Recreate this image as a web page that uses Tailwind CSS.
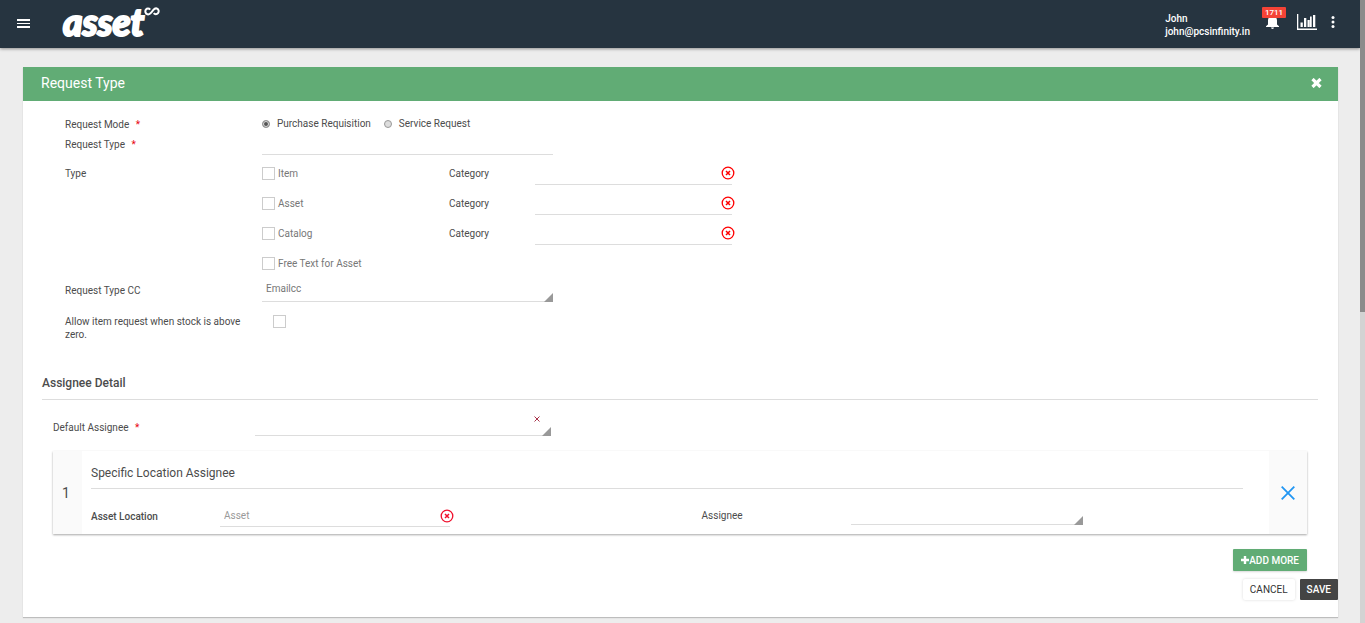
<!DOCTYPE html>
<html lang="en">
<head>
  <meta charset="UTF-8" />
  <meta name="viewport" content="width=device-width, initial-scale=1.0" />
  <title>Asset - Request Type</title>
  <script src="https://cdn.jsdelivr.net/npm/@tailwindcss/browser@4"></script>
</head>
<body class="flex min-h-screen bg-[#ededed] font-[Roboto,sans-serif] text-[10px] leading-[13px] text-[#4c4c4c]">

  <svg class="hidden">
    <symbol id="clear" viewBox="0 0 14 14">
      <circle cx="7" cy="7" r="5.8" fill="none" stroke="currentColor" stroke-width="1.3" />
      <path d="M5 5l4 4M9 5l-4 4" fill="none" stroke="currentColor" stroke-width="1.5" />
    </symbol>
    <symbol id="corner" viewBox="0 0 9 9"><path d="M9 0v9H0z" fill="#999" /></symbol>
  </svg>

  <div class="min-w-0 flex-1">
    <!-- Top bar -->
    <header class="flex h-12 items-center bg-[#263440] pr-[25px] pb-1 pl-[17px] text-white shadow-[0_1px_3px_rgba(0,0,0,0.4)]">
      <button type="button" aria-label="Menu" class="flex pt-[3px]">
        <svg class="h-[9px] w-[13px]" viewBox="0 0 13 9" fill="#fff" shape-rendering="crispEdges"><path d="M0 0h13v2H0zM0 4h13v1H0zM0 7h13v2H0z" /></svg>
      </button>
      <a href="#" class="ml-[33px] flex items-start">
        <span class="font-[Lato,sans-serif] text-[37px] leading-10 font-black italic [-webkit-text-stroke:2px_#fff]">asset</span>
        <svg class="mt-[5px] h-[9px] w-4" viewBox="0 0 16 9" fill="none" stroke="#fff" stroke-width="2"><path d="M6.200 2.600C5 1.200 3 1.100 1.900 2.600C.8 4.200 1.400 6.800 3.400 7.300C5 7.700 6.200 6.800 7.200 5.600L9.400 2.900C10.400 1.700 11.500 1.100 12.800 1.500C14.800 2.100 15.200 4.700 14 6.200C12.800 7.700 10.800 7.600 9.700 6.200" /></svg>
      </a>
      <div class="ml-auto pt-[6px] font-medium">
        <div>John</div>
        <div>john@pcsinfinity.in</div>
      </div>
      <button type="button" aria-label="Notifications" class="relative ml-3 flex h-[30px] w-6 items-end pb-2 pl-1">
        <svg class="h-[15px] w-[13px]" viewBox="0 0 13 15" fill="#fff"><path d="M6.500 0a1 1 0 0 1 1 1v1c2.300.500 3.500 2.300 3.500 4.500v4l2 1.700V13H0v-.800l2-1.700v-4C2 4.300 3.200 2.500 5.500 2V1a1 1 0 0 1 1-1zM5 13.600h3a1.500 1.300 0 0 1-3 0z" /></svg>
        <span class="absolute top-0 left-0 h-[11px] w-6 rounded-[1px] bg-[#f44336] text-center text-[8px] leading-[11px] font-medium">1711</span>
      </button>
      <button type="button" aria-label="Reports" class="ml-[11px] flex">
        <svg class="h-4 w-5" viewBox="0 0 20 16" fill="#fff"><path d="M0 0h1.300v14.500H20V16H0zM3.500 8.500h2.300V13H3.500zM7 4h2.300v9H7zM10.500 6h2.300v7h-2.300zM13 2.500h1.700V13H13zM16 1h2.300v12H16z" /></svg>
      </button>
      <button type="button" aria-label="More" class="ml-[14px] flex">
        <svg class="h-3 w-1" viewBox="0 0 4 12" fill="#fff"><circle cx="2" cy="1.600" r="1.500" /><circle cx="2" cy="6" r="1.500" /><circle cx="2" cy="10.400" r="1.500" /></svg>
      </button>
    </header>

    <main class="mt-[19px] mr-[22px] mb-[6px] ml-[23px] bg-white pb-[17px] shadow-[0_1px_1px_rgba(0,0,0,0.2)]">
      <div class="flex h-[34px] items-center justify-between bg-[#61ac75] pr-4 pb-[2px] pl-[18px] text-white">
        <h1 class="text-sm">Request Type</h1>
        <button type="button" aria-label="Close" class="flex">
          <svg class="h-[10px] w-[11px]" viewBox="0 0 11 10"><path d="M1.500 1l8 8M9.500 1l-8 8" stroke="#fff" stroke-width="3.200" /></svg>
        </button>
      </div>

      <form>
        <div class="px-[42px] pt-[13px]">
          <fieldset class="flex h-5 items-start pt-[3px]">
            <legend class="float-left w-[197px] pt-px">Request Mode <span class="ml-1 text-red-600">*</span></legend>
            <label class="flex items-center gap-[7px]">
              <input type="radio" name="mode" checked class="size-2 appearance-none rounded-full border border-[#999] bg-[#ddd] checked:bg-[#555] checked:shadow-[inset_0_0_0_1px_#ddd]" />
              Purchase Requisition
            </label>
            <label class="ml-[13px] flex items-center gap-[7px]">
              <input type="radio" name="mode" class="size-2 appearance-none rounded-full border border-[#999] bg-[#ddd] checked:bg-[#555] checked:shadow-[inset_0_0_0_1px_#ddd]" />
              Service Request
            </label>
          </fieldset>

          <div class="flex h-[21px] items-center">
            <label for="request-type" class="w-[197px]">Request Type <span class="ml-1 text-red-600">*</span></label>
            <input id="request-type" type="text" required class="h-full w-[291px] border-b border-[#ddd] px-1 outline-none" />
          </div>

          <div class="mt-[3px] flex">
            <div class="w-[197px] pt-[9px]">Type</div>
            <div class="text-[#777]">
              <div class="flex h-[30px] items-center">
                <label class="flex w-[187px] items-center gap-[3px]"><input type="checkbox" class="size-[13px] appearance-none border border-[#ccc] checked:bg-[#61ac75]" />Item</label>
                <label for="cat-item" class="w-[86px] text-[#4c4c4c]">Category</label>
                <input id="cat-item" type="text" class="h-6 w-[197px] border-b border-[#ddd] px-1 outline-none" />
                <button type="button" aria-label="Clear" class="-ml-[11px] text-[#f00]"><svg class="size-[14px]"><use href="#clear" /></svg></button>
              </div>
              <div class="flex h-[30px] items-center">
                <label class="flex w-[187px] items-center gap-[3px]"><input type="checkbox" class="size-[13px] appearance-none border border-[#ccc] checked:bg-[#61ac75]" />Asset</label>
                <label for="cat-asset" class="w-[86px] text-[#4c4c4c]">Category</label>
                <input id="cat-asset" type="text" class="h-6 w-[197px] border-b border-[#ddd] px-1 outline-none" />
                <button type="button" aria-label="Clear" class="-ml-[11px] text-[#f00]"><svg class="size-[14px]"><use href="#clear" /></svg></button>
              </div>
              <div class="flex h-[30px] items-center">
                <label class="flex w-[187px] items-center gap-[3px]"><input type="checkbox" class="size-[13px] appearance-none border border-[#ccc] checked:bg-[#61ac75]" />Catalog</label>
                <label for="cat-catalog" class="w-[86px] text-[#4c4c4c]">Category</label>
                <input id="cat-catalog" type="text" class="h-6 w-[197px] border-b border-[#ddd] px-1 outline-none" />
                <button type="button" aria-label="Clear" class="-ml-[11px] text-[#f00]"><svg class="size-[14px]"><use href="#clear" /></svg></button>
              </div>
              <div class="flex h-[30px] items-center">
                <label class="flex items-center gap-[3px]"><input type="checkbox" class="size-[13px] appearance-none border border-[#ccc] checked:bg-[#61ac75]" />Free Text for Asset</label>
              </div>
            </div>
          </div>

          <div class="flex h-6 items-center">
            <label for="cc" class="w-[197px]">Request Type CC</label>
            <div class="relative h-full w-[291px]">
              <select id="cc" class="h-full w-full appearance-none border-b border-[#ddd] px-1 pb-[3px] text-[#777] outline-none"><option>Emailcc</option></select>
              <svg class="pointer-events-none absolute right-0 bottom-0 size-[9px]"><use href="#corner" /></svg>
            </div>
          </div>

          <div class="mt-[13px] flex items-start">
            <label for="allow" class="w-[197px] pr-5">Allow item request when stock is above zero.</label>
            <input id="allow" type="checkbox" class="ml-[11px] size-[13px] appearance-none border border-[#ccc] checked:bg-[#61ac75]" />
          </div>
        </div>

        <h2 class="mr-5 ml-[19px] mt-[34px] border-b border-[#ddd] pb-2 text-xs leading-4 font-medium">Assignee Detail</h2>

        <div class="mt-[11px] mr-[31px] ml-[30px]">
          <div class="flex h-[25px] items-center">
            <label for="assignee" class="w-[202px] pt-2">Default Assignee <span class="ml-1 text-red-600">*</span></label>
            <div class="relative h-full w-[296px]">
              <select id="assignee" required class="h-full w-full appearance-none border-b border-[#ddd] px-1 outline-none"><option></option></select>
              <svg class="pointer-events-none absolute right-0 bottom-0 size-[9px]"><use href="#corner" /></svg>
              <button type="button" aria-label="Clear assignee" class="absolute top-[5px] right-[11px] flex"><svg class="size-[6px]" viewBox="0 0 6 6"><path d="M.5.5l5 5M5.500.5l-5 5" stroke="#a8324a" stroke-width="1" /></svg></button>
            </div>
          </div>

          <!-- Location row -->
          <section class="mt-[15px] flex h-[83px] shadow-[0_1px_2px_rgba(0,0,0,0.35)]">
            <div class="flex w-[29px] items-center bg-[#fafafa] pl-[9px] text-sm">1</div>
            <div class="flex-1 pr-[26px] pl-[9px]">
              <h3 class="border-b border-[#ddd] pt-[14px] pb-[7px] text-xs leading-4">Specific Location Assignee</h3>
              <div class="flex items-start pt-4">
                <div class="flex w-[53%] items-center">
                  <label for="location" class="w-[129px] font-medium">Asset Location</label>
                  <input id="location" type="text" placeholder="Asset" class="h-[22px] w-[230px] border-b border-[#ddd] px-1 outline-none placeholder:text-[#999]" />
                  <button type="button" aria-label="Clear location" class="-ml-[10px] text-[#f0102d]"><svg class="size-[14px]"><use href="#clear" /></svg></button>
                </div>
                <div class="flex items-center">
                  <label for="loc-assignee" class="w-[149px]">Assignee</label>
                  <div class="relative h-5 w-[232px]">
                    <select id="loc-assignee" class="h-full w-full appearance-none border-b border-[#ddd] px-1 outline-none"><option></option></select>
                    <svg class="pointer-events-none absolute right-0 bottom-0 size-[9px]"><use href="#corner" /></svg>
                  </div>
                </div>
              </div>
            </div>
            <button type="button" aria-label="Remove row" class="flex w-[38px] items-center justify-center bg-[#fafafa]">
              <svg class="size-[14px]" viewBox="0 0 14 14"><path d="M.7.7l12.600 12.600M13.300.7L.7 13.300" stroke="#2196f3" stroke-width="1.800" /></svg>
            </button>
          </section>

          <div class="mt-[15px] flex justify-end">
            <button type="button" class="flex h-[22px] items-center rounded-[1px] bg-[#61ac75] px-2 font-medium text-white shadow-[0_1px_2px_rgba(0,0,0,0.15)]">
              <svg class="size-2" viewBox="0 0 8 8"><path d="M4 0v8M0 4h8" stroke="#fff" stroke-width="2.400" /></svg>ADD MORE
            </button>
          </div>
        </div>

        <div class="mt-2 flex justify-end gap-[5px]">
          <button type="button" class="h-[21px] rounded-[2px] bg-white px-[7px] text-[#333] shadow-[0_0_3px_rgba(0,0,0,0.15)]">CANCEL</button>
          <button type="submit" class="h-[21px] rounded-[1px] bg-[#444] px-[7px] font-medium text-white">SAVE</button>
        </div>
      </form>
    </main>
  </div>

  <!-- Scroll track -->
  <div class="w-[5px] bg-[#d3d3d3]">
    <div class="h-[312px] bg-[#8b8b8b]"></div>
  </div>
</body>
</html>
